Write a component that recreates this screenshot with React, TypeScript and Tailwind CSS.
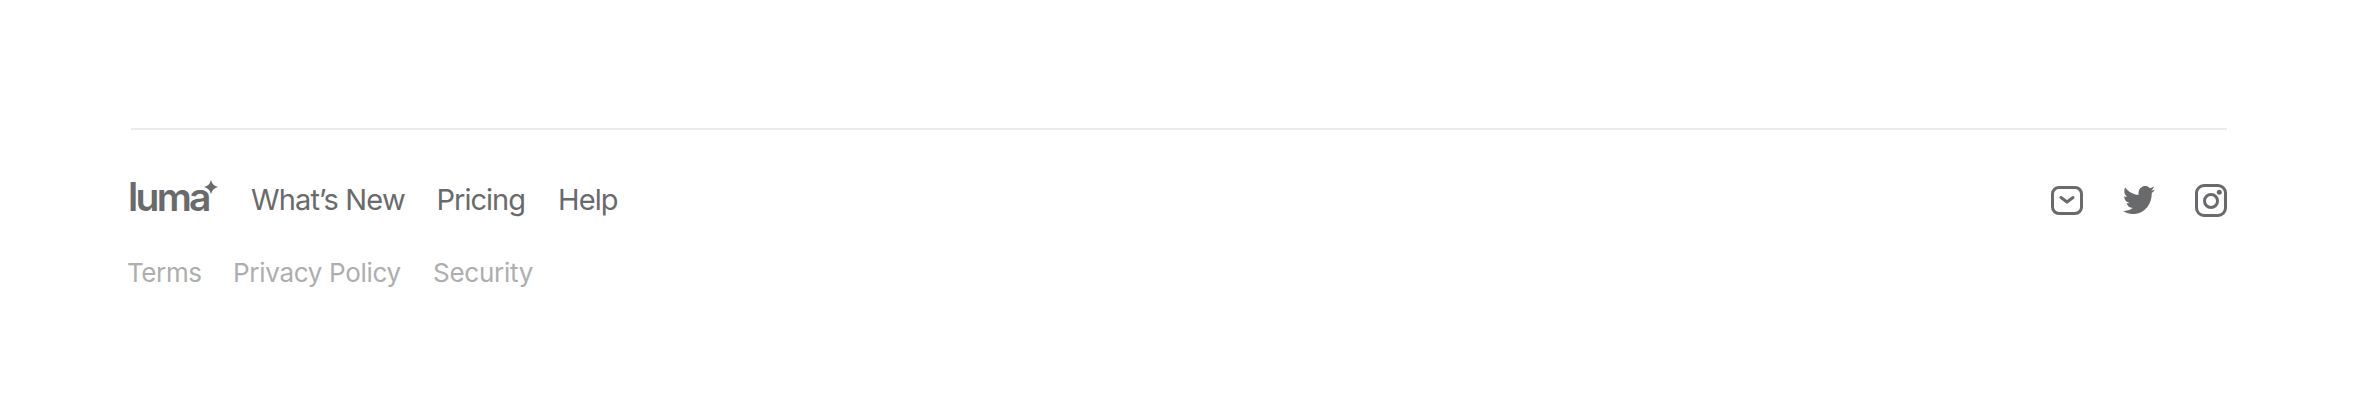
import type { ReactNode } from "react";

const Logo = () => (
  <a href="#" className="relative block h-10 w-[88px]">
    <span className="-ml-[3px] -mt-[3px] block whitespace-nowrap font-['Inter'] text-[39px] font-semibold leading-[40px] tracking-[-2.7px]">
      luma
    </span>
    {/* Sparkle */}
    <svg
      viewBox="0 0 14 14"
      className="absolute left-[73px] top-0 h-[14px] w-[14px]"
      fill="currentColor"
    >
      <path d="M7 0 Q8.3 5.7 14 7 Q8.3 8.3 7 14 Q5.7 8.3 0 7 Q5.7 5.7 7 0Z" />
    </svg>
  </a>
);

const MailIcon = () => (
  <svg viewBox="0 0 32 32" className="size-8" fill="none" stroke="currentColor" strokeWidth="3">
    <rect x="1.5" y="3.5" width="29" height="26" rx="6.5" />
    <path d="M10 13.5l6 4.5 6-4.5" strokeLinecap="round" strokeLinejoin="round" />
  </svg>
);

const TwitterIcon = () => (
  <svg viewBox="0 2.2 24 19.5" preserveAspectRatio="none" className="h-7 w-8" fill="currentColor">
    <path d="M23.953 4.57a10 10 0 01-2.825.775 4.958 4.958 0 002.163-2.723c-.951.555-2.005.959-3.127 1.184a4.92 4.92 0 00-8.384 4.482C7.69 8.095 4.067 6.13 1.64 3.162a4.822 4.822 0 00-.666 2.475c0 1.71.87 3.213 2.188 4.096a4.904 4.904 0 01-2.228-.616v.06a4.923 4.923 0 003.946 4.827 4.996 4.996 0 01-2.212.085 4.936 4.936 0 004.604 3.417 9.867 9.867 0 01-6.102 2.105c-.39 0-.779-.023-1.17-.067a13.995 13.995 0 007.557 2.209c9.053 0 13.998-7.496 13.998-13.985 0-.21 0-.42-.015-.63A9.935 9.935 0 0024 4.59z" />
  </svg>
);

const InstagramIcon = () => (
  <svg viewBox="0 0 32 33" className="h-[33px] w-8" fill="none" stroke="currentColor" strokeWidth="3">
    <rect x="1.5" y="1.5" width="29" height="30" rx="7.5" />
    <circle cx="16" cy="17" r="6.5" />
    <circle cx="24.3" cy="8.2" r="2.5" fill="currentColor" stroke="none" />
  </svg>
);

const NavLink = ({ children, className }: { children: ReactNode; className: string }) => (
  <a href="#" className={`block whitespace-nowrap ${className}`}>
    {children}
  </a>
);

const App = () => {
  return (
    <div className="h-[415px] w-full overflow-hidden bg-white pt-32 font-['Inter',sans-serif]">
      <footer className="ml-[131px] w-[2096px] border-t-2 border-[#ebebec]">
        <div className="mt-[50px] flex h-10 items-center justify-between text-[#696a6c]">
          <div className="flex items-center text-[29px] leading-[40px]">
            <Logo />
            <NavLink className="ml-8 w-[185.5px] tracking-[-0.85px]">What’s New</NavLink>
            <NavLink className="w-[121.5px] tracking-[-1px]">Pricing</NavLink>
            <NavLink className="tracking-[-0.9px]">Help</NavLink>
          </div>
          <div className="flex items-center gap-10">
            <MailIcon />
            <TwitterIcon />
            <InstagramIcon />
          </div>
        </div>
        <div className="-ml-1 mt-[33px] flex text-[26px] leading-[40px] text-[#adaeae]">
          <NavLink className="w-[106px] tracking-[-0.4px]">Terms</NavLink>
          <NavLink className="w-[200px] tracking-[-0.3px]">Privacy Policy</NavLink>
          <NavLink className="tracking-[-0.25px]">Security</NavLink>
        </div>
      </footer>
    </div>
  );
};

export default App;
